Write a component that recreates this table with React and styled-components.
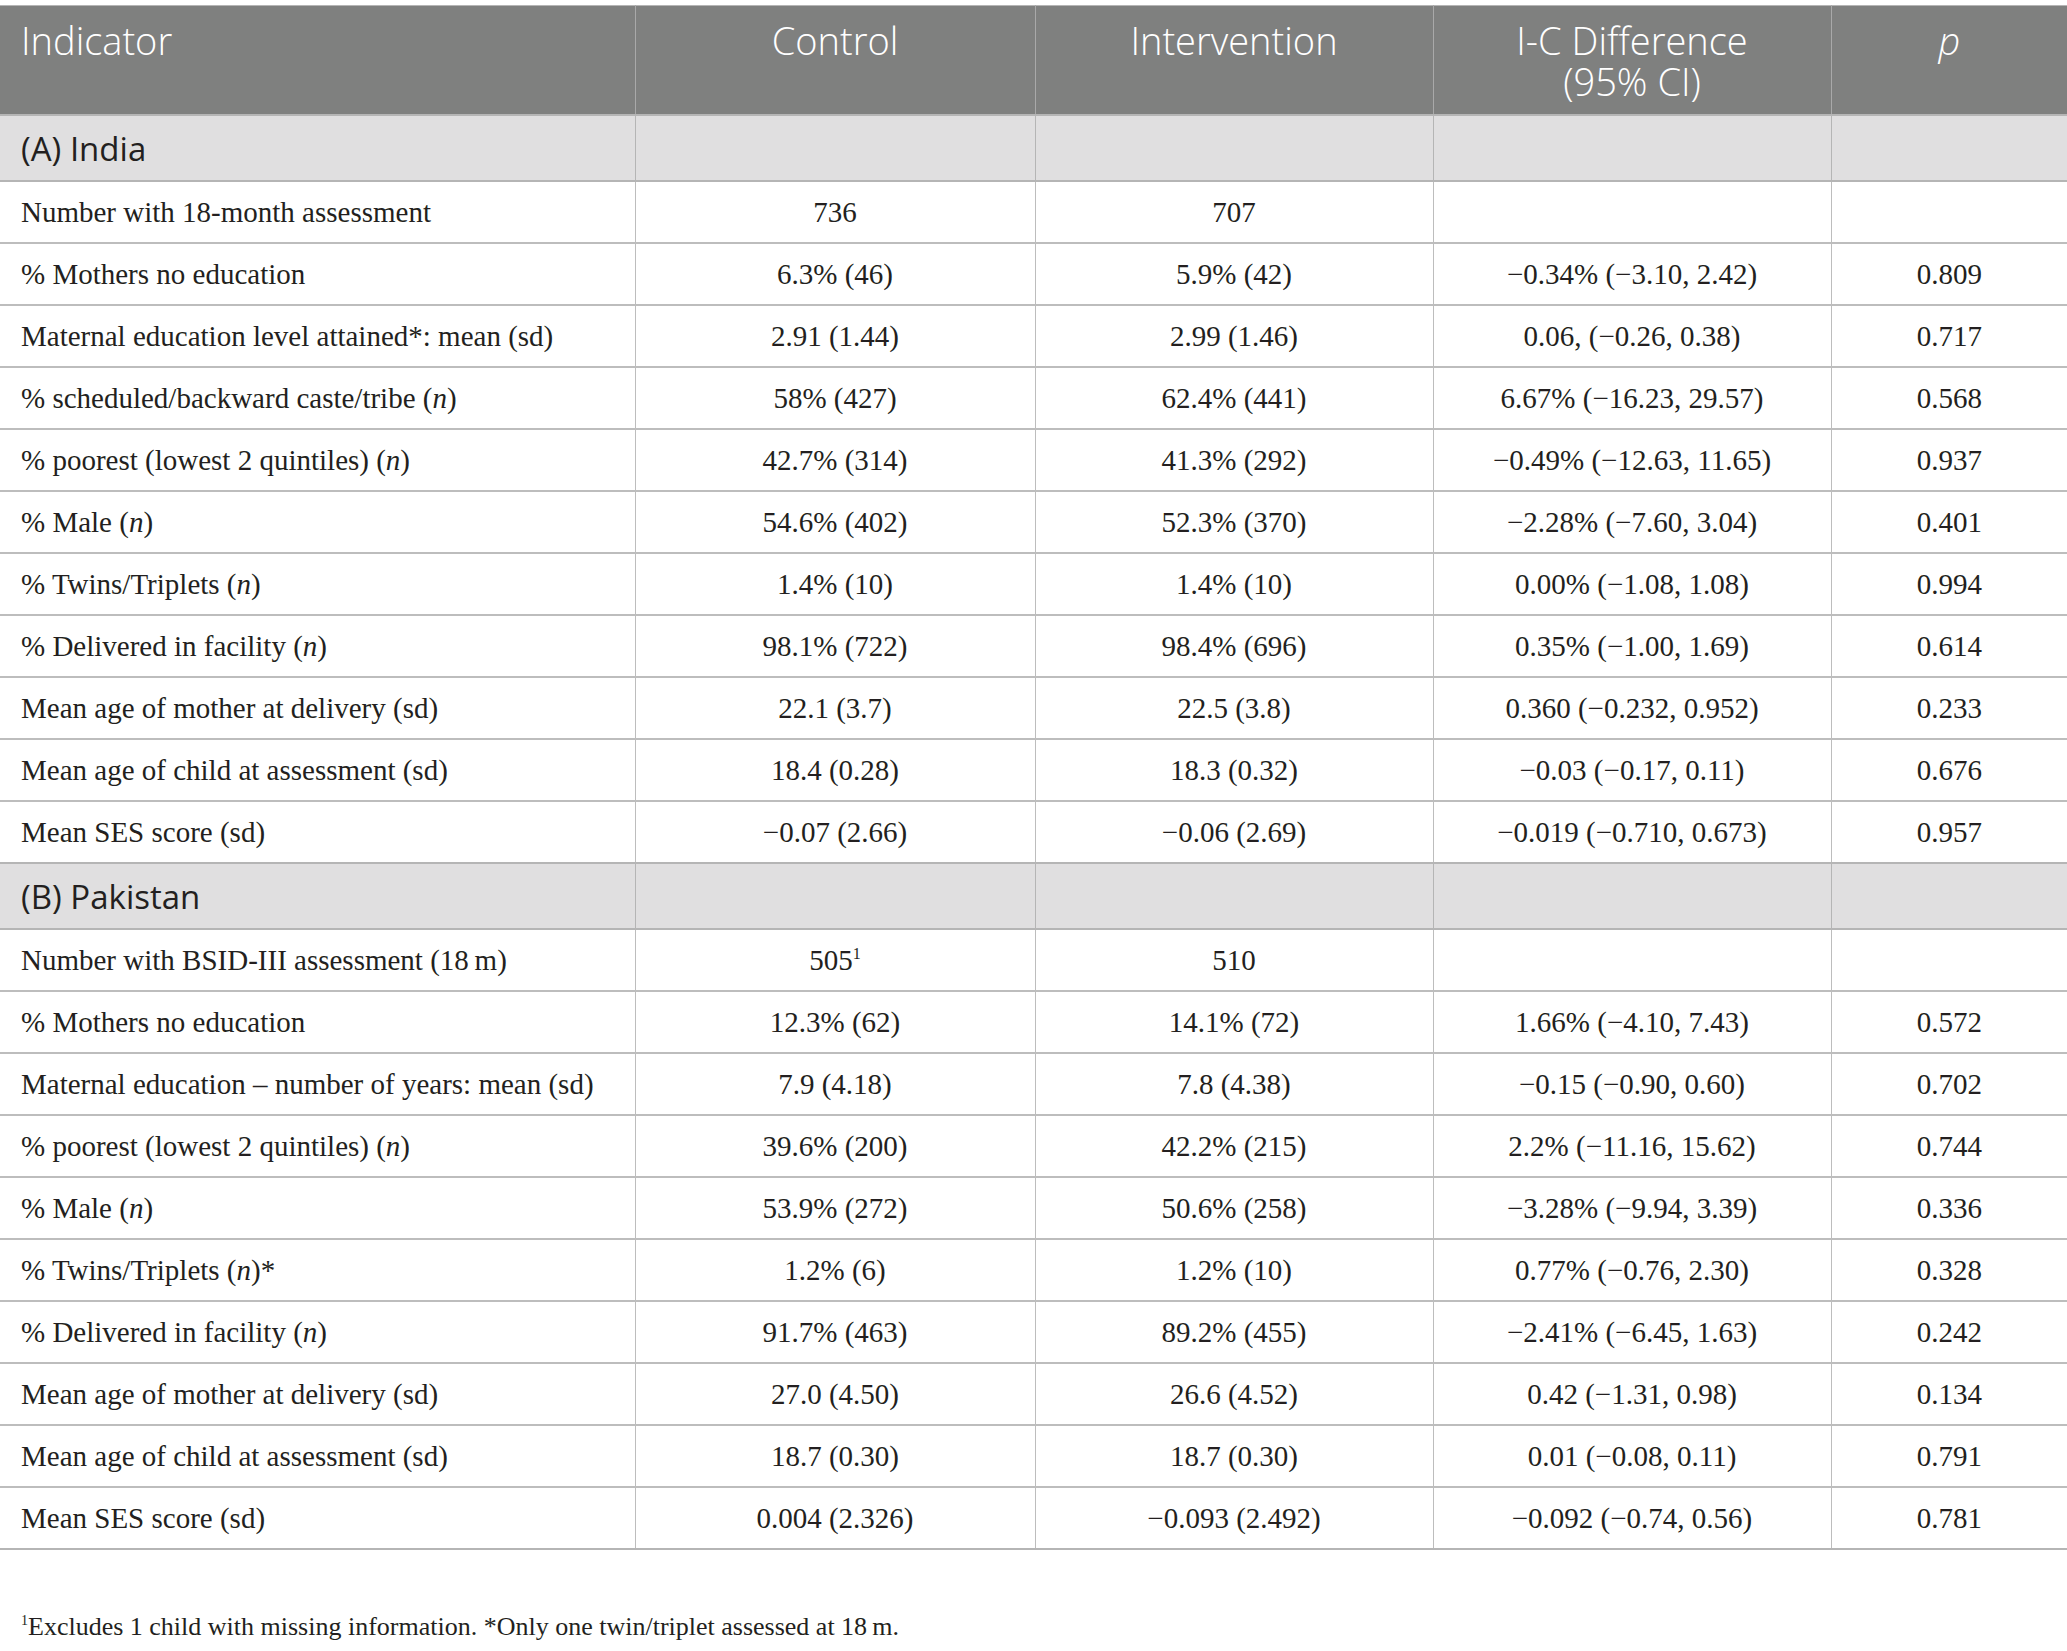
import React from "react"
import styled, { createGlobalStyle } from "styled-components"

const GlobalStyle = createGlobalStyle`
  html, body {
    margin: 0;
    padding: 0;
    background: #ffffff;
  }
  body {
    font-family: "Liberation Serif", "Times New Roman", serif;
    color: #231f20;
  }
`

const Page = styled.div`
  width: 2067px;
  padding-top: 5px;
`

const Table = styled.table`
  width: 2067px;
  border-collapse: collapse;
  table-layout: fixed;
  border-top: 1px solid #b5b5b5;
  border-bottom: 2px solid #b5b5b5;
`

const HeadCell = styled.th`
  background: #7f807f;
  color: #ffffff;
  font-family: "Open Sans", "Noto Sans", sans-serif;
  font-weight: 300;
  font-size: 38px;
  line-height: 41px;
  height: 108px;
  padding: 0 21px;
  vertical-align: top;
  text-align: ${({ $left }) => ($left ? "left" : "center")};
  font-style: ${({ $italic }) => ($italic ? "italic" : "normal")};
  border-left: 1px solid #a9a9a9;
  &:first-child {
    border-left: none;
  }
  span {
    display: block;
    padding-top: 14px;
  }
`

const SectionCell = styled.td`
  background: #e0dfe0;
  font-family: "Open Sans", "Noto Sans", sans-serif;
  font-size: 33px;
  height: 64px;
  padding: 0 21px;
  border: 1px solid #b5b5b5;
  border-width: 2px 0 2px 1px;
  &:first-child {
    border-left: none;
  }
`

const Cell = styled.td`
  height: 60px;
  padding: 0 21px;
  font-size: 29px;
  text-align: ${({ $left }) => ($left ? "left" : "center")};
  border: 1px solid #bdbdbd;
  border-width: 2px 0 0 1px;
  white-space: nowrap;
  &:first-child {
    border-left: none;
  }
  sup {
    font-size: 16px;
    line-height: 0;
  }
`

const Footnote = styled.p`
  margin: 62px 0 0;
  padding-left: 21px;
  font-size: 26px;
  sup {
    font-size: 14px;
  }
`

const N = () => <i>n</i>

const india = [
  ["Number with 18-month assessment", "736", "707", "", ""],
  ["% Mothers no education", "6.3% (46)", "5.9% (42)", "−0.34% (−3.10, 2.42)", "0.809"],
  ["Maternal education level attained*: mean (sd)", "2.91 (1.44)", "2.99 (1.46)", "0.06, (−0.26, 0.38)", "0.717"],
  [<>% scheduled/backward caste/tribe (<N />)</>, "58% (427)", "62.4% (441)", "6.67% (−16.23, 29.57)", "0.568"],
  [<>% poorest (lowest 2 quintiles) (<N />)</>, "42.7% (314)", "41.3% (292)", "−0.49% (−12.63, 11.65)", "0.937"],
  [<>% Male (<N />)</>, "54.6% (402)", "52.3% (370)", "−2.28% (−7.60, 3.04)", "0.401"],
  [<>% Twins/Triplets (<N />)</>, "1.4% (10)", "1.4% (10)", "0.00% (−1.08, 1.08)", "0.994"],
  [<>% Delivered in facility (<N />)</>, "98.1% (722)", "98.4% (696)", "0.35% (−1.00, 1.69)", "0.614"],
  ["Mean age of mother at delivery (sd)", "22.1 (3.7)", "22.5 (3.8)", "0.360 (−0.232, 0.952)", "0.233"],
  ["Mean age of child at assessment (sd)", "18.4 (0.28)", "18.3 (0.32)", "−0.03 (−0.17, 0.11)", "0.676"],
  ["Mean SES score (sd)", "−0.07 (2.66)", "−0.06 (2.69)", "−0.019 (−0.710, 0.673)", "0.957"],
]

const pakistan = [
  ["Number with BSID-III assessment (18\u2009m)", <>505<sup>1</sup></>, "510", "", ""],
  ["% Mothers no education", "12.3% (62)", "14.1% (72)", "1.66% (−4.10, 7.43)", "0.572"],
  ["Maternal education – number of years: mean (sd)", "7.9 (4.18)", "7.8 (4.38)", "−0.15 (−0.90, 0.60)", "0.702"],
  [<>% poorest (lowest 2 quintiles) (<N />)</>, "39.6% (200)", "42.2% (215)", "2.2% (−11.16, 15.62)", "0.744"],
  [<>% Male (<N />)</>, "53.9% (272)", "50.6% (258)", "−3.28% (−9.94, 3.39)", "0.336"],
  [<>% Twins/Triplets (<N />)*</>, "1.2% (6)", "1.2% (10)", "0.77% (−0.76, 2.30)", "0.328"],
  [<>% Delivered in facility (<N />)</>, "91.7% (463)", "89.2% (455)", "−2.41% (−6.45, 1.63)", "0.242"],
  ["Mean age of mother at delivery (sd)", "27.0 (4.50)", "26.6 (4.52)", "0.42 (−1.31, 0.98)", "0.134"],
  ["Mean age of child at assessment (sd)", "18.7 (0.30)", "18.7 (0.30)", "0.01 (−0.08, 0.11)", "0.791"],
  ["Mean SES score (sd)", "0.004 (2.326)", "−0.093 (2.492)", "−0.092 (−0.74, 0.56)", "0.781"],
]

const Section = ({ title }) => (
  <tr>
    <SectionCell>{title}</SectionCell>
    <SectionCell />
    <SectionCell />
    <SectionCell />
    <SectionCell />
  </tr>
)

const Rows = ({ rows }) =>
  rows.map((r, i) => (
    <tr key={i}>
      <Cell $left>{r[0]}</Cell>
      <Cell>{r[1]}</Cell>
      <Cell>{r[2]}</Cell>
      <Cell>{r[3]}</Cell>
      <Cell>{r[4]}</Cell>
    </tr>
  ))

export default function App() {
  return (
    <Page>
      <GlobalStyle />
      <Table>
        <colgroup>
          <col style={{ width: 635 }} />
          <col style={{ width: 400 }} />
          <col style={{ width: 398 }} />
          <col style={{ width: 398 }} />
          <col style={{ width: 236 }} />
        </colgroup>
        <thead>
          <tr>
            <HeadCell $left><span>Indicator</span></HeadCell>
            <HeadCell><span>Control</span></HeadCell>
            <HeadCell><span>Intervention</span></HeadCell>
            <HeadCell><span>I-C Difference<br />(95% CI)</span></HeadCell>
            <HeadCell $italic><span>p</span></HeadCell>
          </tr>
        </thead>
        <tbody>
          <Section title="(A) India" />
          <Rows rows={india} />
          <Section title="(B) Pakistan" />
          <Rows rows={pakistan} />
        </tbody>
      </Table>
      <Footnote>
        <sup>1</sup>Excludes 1 child with missing information. *Only one twin/triplet assessed at 18{"\u2009"}m.
      </Footnote>
    </Page>
  )
}
